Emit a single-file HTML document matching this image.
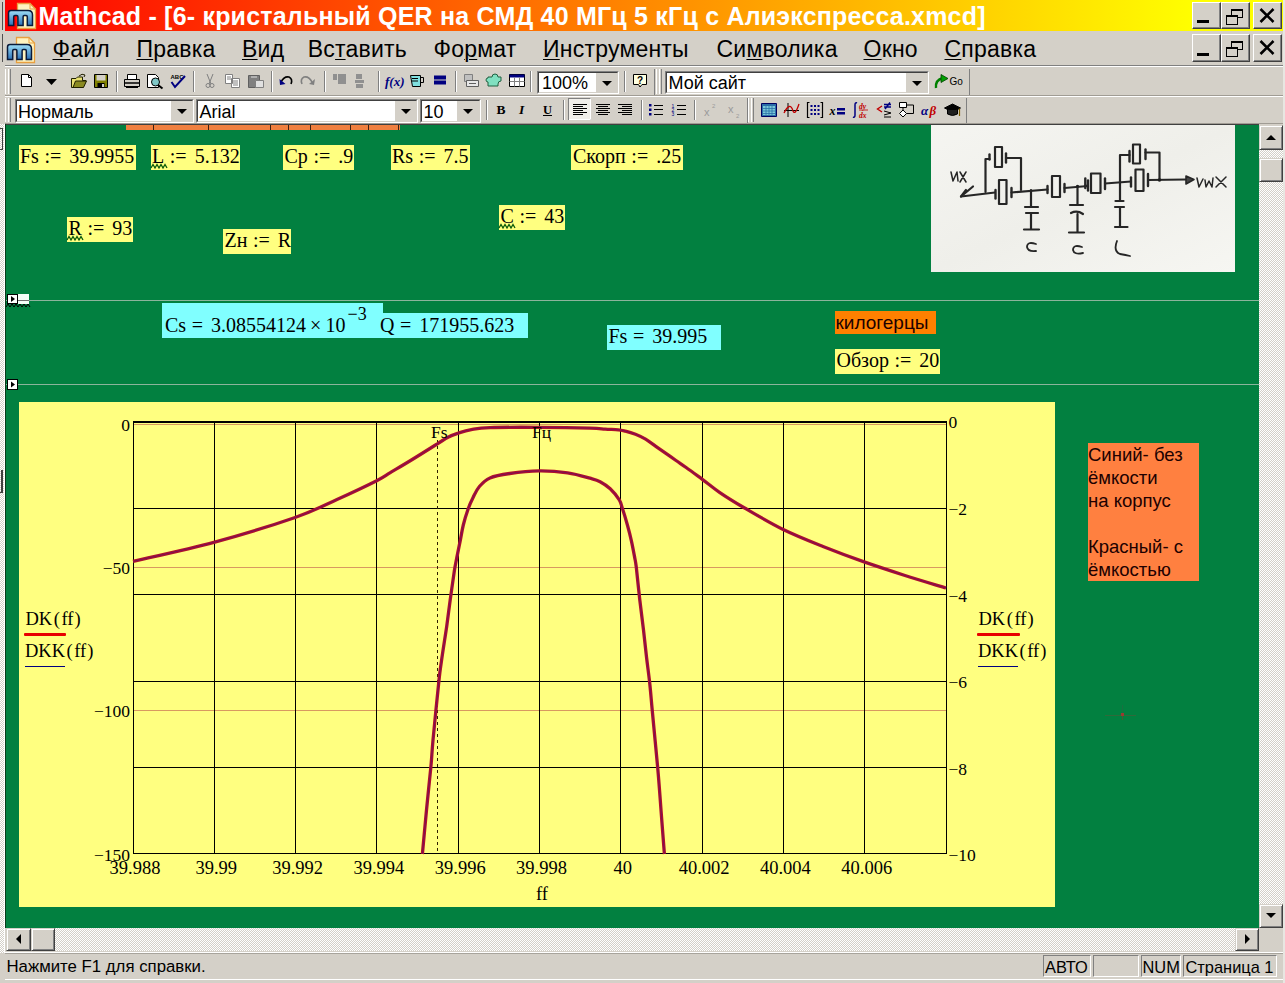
<!DOCTYPE html>
<html><head><meta charset="utf-8">
<style>
html,body{margin:0;padding:0;}
body{width:1285px;height:983px;overflow:hidden;position:relative;background:#d4d0c8;font-family:"Liberation Sans",sans-serif;}
.a{position:absolute;}
.t{position:absolute;white-space:pre;line-height:1;}
.s{font-family:"Liberation Sans",sans-serif;}
.m{font-family:"Liberation Serif",serif;}
.u{text-decoration:underline;text-decoration-thickness:1px;text-underline-offset:2px;}
.dith{background-color:#eeece6;background-image:repeating-conic-gradient(#d4d0c8 0 25%,#ffffff 0 50%);background-size:2px 2px;}
</style></head><body>
<div class="a" style="left:0px;top:0px;width:6px;height:983px;background:#d4d0c8;"></div>
<div class="a dith" style="left:0;top:124px;width:4px;height:829px;"></div>
<div class="a" style="left:4px;top:124px;width:1px;height:829px;background:#fff;"></div>
<div class="a" style="left:5px;top:124px;width:1px;height:804px;background:#0a3a1a;"></div>
<div class="a" style="left:2px;top:2px;width:1px;height:28px;background:#505050;"></div>
<div class="a" style="left:2px;top:34px;width:1px;height:28px;background:#505050;"></div>
<div class="a" style="left:-2px;top:128px;width:5px;height:22px;box-sizing:border-box;border:1px solid #404040;border-left:none;"></div>
<div class="a" style="left:-2px;top:470px;width:5px;height:23px;box-sizing:border-box;border-right:2px solid #404040;border-bottom:1px solid #404040;"></div>
<div class="a" style="left:5px;top:0px;width:1280px;height:31px;background:linear-gradient(to right,#ff0000 0px,#ffff00 1190px);"></div>
<div class="t s" style="left:38.5px;top:4.25px;font-size:25px;color:#fff;font-weight:bold;letter-spacing:0.2px;">Mathcad - [6- кристальный QER на СМД 40 МГц 5 кГц с Алиэкспресса.xmcd]</div>
<div class="a" style="left:5px;top:31px;width:1280px;height:35px;background:#d4d0c8;"></div>
<div class="a" style="left:5px;top:65px;width:1280px;height:1px;background:#808080;"></div>
<div class="a" style="left:5px;top:66px;width:1280px;height:1px;background:#fff;"></div>
<div class="t s" style="left:52.5px;top:38.05px;font-size:23px;color:#000;letter-spacing:0.22px;"><span class="u">Ф</span>айл</div>
<div class="t s" style="left:136.5px;top:38.05px;font-size:23px;color:#000;letter-spacing:0.22px;"><span class="u">П</span>равка</div>
<div class="t s" style="left:242px;top:38.05px;font-size:23px;color:#000;letter-spacing:0.22px;"><span class="u">В</span>ид</div>
<div class="t s" style="left:307.8px;top:38.05px;font-size:23px;color:#000;letter-spacing:0.22px;">Вс<span class="u">т</span>авить</div>
<div class="t s" style="left:433.5px;top:38.05px;font-size:23px;color:#000;letter-spacing:0.22px;">Фо<span class="u">р</span>мат</div>
<div class="t s" style="left:543px;top:38.05px;font-size:23px;color:#000;letter-spacing:0.22px;"><span class="u">И</span>нструменты</div>
<div class="t s" style="left:716.5px;top:38.05px;font-size:23px;color:#000;letter-spacing:0.22px;">Си<span class="u">м</span>волика</div>
<div class="t s" style="left:863.5px;top:38.05px;font-size:23px;color:#000;letter-spacing:0.22px;"><span class="u">О</span>кно</div>
<div class="t s" style="left:944.5px;top:38.05px;font-size:23px;color:#000;letter-spacing:0.22px;"><span class="u">С</span>правка</div>
<div class="a" style="left:1192px;top:2px;width:29px;height:27px;background:#d4d0c8;box-sizing:border-box;border-top:1px solid #fff;border-left:1px solid #fff;border-right:1px solid #404040;border-bottom:1px solid #404040;box-shadow:inset -1px -1px 0 #808080;"></div><svg class="a" style="left:1192px;top:2px" width="29" height="27" shape-rendering="crispEdges"><rect x="5" y="18" width="12" height="3" fill="#000"/></svg>
<div class="a" style="left:1221px;top:2px;width:29px;height:27px;background:#d4d0c8;box-sizing:border-box;border-top:1px solid #fff;border-left:1px solid #fff;border-right:1px solid #404040;border-bottom:1px solid #404040;box-shadow:inset -1px -1px 0 #808080;"></div><svg class="a" style="left:1221px;top:2px" width="29" height="27" shape-rendering="crispEdges"><rect x="10.5" y="7.5" width="11" height="8" fill="none" stroke="#000" stroke-width="1"/><rect x="10" y="7" width="12" height="2" fill="#000"/><rect x="5.5" y="13.5" width="11" height="9" fill="#d4d0c8" stroke="#000" stroke-width="1"/><rect x="5" y="13" width="12" height="2" fill="#000"/></svg>
<div class="a" style="left:1253px;top:2px;width:29px;height:27px;background:#d4d0c8;box-sizing:border-box;border-top:1px solid #fff;border-left:1px solid #fff;border-right:1px solid #404040;border-bottom:1px solid #404040;box-shadow:inset -1px -1px 0 #808080;"></div><svg class="a" style="left:1253px;top:2px" width="29" height="27" shape-rendering="crispEdges"><path d="M7.5,7 L20.5,20 M20.5,7 L7.5,20" stroke="#000" stroke-width="2.6" shape-rendering="geometricPrecision"/></svg>
<div class="a" style="left:1192px;top:34px;width:29px;height:28px;background:#d4d0c8;box-sizing:border-box;border-top:1px solid #fff;border-left:1px solid #fff;border-right:1px solid #404040;border-bottom:1px solid #404040;box-shadow:inset -1px -1px 0 #808080;"></div><svg class="a" style="left:1192px;top:34px" width="29" height="28" shape-rendering="crispEdges"><rect x="5" y="19" width="12" height="3" fill="#000"/></svg>
<div class="a" style="left:1221px;top:34px;width:29px;height:28px;background:#d4d0c8;box-sizing:border-box;border-top:1px solid #fff;border-left:1px solid #fff;border-right:1px solid #404040;border-bottom:1px solid #404040;box-shadow:inset -1px -1px 0 #808080;"></div><svg class="a" style="left:1221px;top:34px" width="29" height="28" shape-rendering="crispEdges"><rect x="10.5" y="7.5" width="11" height="8" fill="none" stroke="#000" stroke-width="1"/><rect x="10" y="7" width="12" height="2" fill="#000"/><rect x="5.5" y="13.5" width="11" height="9" fill="#d4d0c8" stroke="#000" stroke-width="1"/><rect x="5" y="13" width="12" height="2" fill="#000"/></svg>
<div class="a" style="left:1253px;top:34px;width:29px;height:28px;background:#d4d0c8;box-sizing:border-box;border-top:1px solid #fff;border-left:1px solid #fff;border-right:1px solid #404040;border-bottom:1px solid #404040;box-shadow:inset -1px -1px 0 #808080;"></div><svg class="a" style="left:1253px;top:34px" width="29" height="28" shape-rendering="crispEdges"><path d="M7.5,7 L20.5,20 M20.5,7 L7.5,20" stroke="#000" stroke-width="2.6" shape-rendering="geometricPrecision"/></svg>
<svg class="a" style="left:7px;top:2px" width="32" height="28"><defs><linearGradient id="mg2" x1="0" y1="0" x2="0" y2="1"><stop offset="0" stop-color="#9fe0f8"/><stop offset="1" stop-color="#2a70b8"/></linearGradient></defs><path d="M10.5,1.5 H23 L28.5,7 V26.5 H10.5 Z" fill="#fff4c0" stroke="#e8a040" stroke-width="1.3"/><path d="M23,1.5 V7 H28.5" fill="none" stroke="#e8a040" stroke-width="1"/><path transform="translate(1.5,8.5)" d="M0,15 V2.5 Q0,0 2.5,0 H19.5 Q24,0 24,4.5 V15 H18.8 V6.2 Q18.8,5 17.6,5 H15.6 Q14.6,5 14.6,6.2 V15 H9.4 V6.2 Q9.4,5 8.2,5 H6.4 Q5.2,5 5.2,6.2 V15 Z" fill="url(#mg2)" stroke="#0a1a3a" stroke-width="1.5"/></svg>
<svg class="a" style="left:6px;top:36px" width="32" height="28"><defs><linearGradient id="mg36" x1="0" y1="0" x2="0" y2="1"><stop offset="0" stop-color="#9fe0f8"/><stop offset="1" stop-color="#2a70b8"/></linearGradient></defs><path d="M10.5,1.5 H23 L28.5,7 V26.5 H10.5 Z" fill="#fff4c0" stroke="#e8a040" stroke-width="1.3"/><path d="M23,1.5 V7 H28.5" fill="none" stroke="#e8a040" stroke-width="1"/><path transform="translate(1.5,8.5)" d="M0,15 V2.5 Q0,0 2.5,0 H19.5 Q24,0 24,4.5 V15 H18.8 V6.2 Q18.8,5 17.6,5 H15.6 Q14.6,5 14.6,6.2 V15 H9.4 V6.2 Q9.4,5 8.2,5 H6.4 Q5.2,5 5.2,6.2 V15 Z" fill="url(#mg36)" stroke="#0a1a3a" stroke-width="1.5"/></svg>
<div class="a" style="left:5px;top:95px;width:1278px;height:1px;background:#a09c94;"></div>
<div class="a" style="left:5px;top:96px;width:1278px;height:1px;background:#fff;"></div>
<div class="a" style="left:5px;top:123px;width:1278px;height:1px;background:#a09c94;"></div>
<svg class="a" style="left:0;top:66px" width="1285" height="58" shape-rendering="crispEdges">
<rect x="5" y="3" width="1" height="25" fill="#fff"/>
<rect x="8" y="3" width="1" height="25" fill="#fff"/>
<rect x="10" y="3" width="1" height="25" fill="#808080"/>
<rect x="5" y="32" width="1" height="24" fill="#fff"/>
<rect x="8" y="32" width="1" height="24" fill="#fff"/>
<rect x="10" y="32" width="1" height="24" fill="#808080"/>
<rect x="656" y="3" width="1" height="25" fill="#fff"/>
<rect x="659" y="3" width="1" height="25" fill="#fff"/>
<rect x="661" y="3" width="1" height="25" fill="#808080"/>
<rect x="748" y="32" width="1" height="24" fill="#fff"/>
<rect x="751" y="32" width="1" height="24" fill="#fff"/>
<rect x="753" y="32" width="1" height="24" fill="#808080"/>
<rect x="116" y="5" width="1" height="21" fill="#808080"/>
<rect x="117" y="5" width="1" height="21" fill="#fff"/>
<rect x="193" y="5" width="1" height="21" fill="#808080"/>
<rect x="194" y="5" width="1" height="21" fill="#fff"/>
<rect x="271" y="5" width="1" height="21" fill="#808080"/>
<rect x="272" y="5" width="1" height="21" fill="#fff"/>
<rect x="324" y="5" width="1" height="21" fill="#808080"/>
<rect x="325" y="5" width="1" height="21" fill="#fff"/>
<rect x="378" y="5" width="1" height="21" fill="#808080"/>
<rect x="379" y="5" width="1" height="21" fill="#fff"/>
<rect x="455" y="5" width="1" height="21" fill="#808080"/>
<rect x="456" y="5" width="1" height="21" fill="#fff"/>
<rect x="530" y="5" width="1" height="21" fill="#808080"/>
<rect x="531" y="5" width="1" height="21" fill="#fff"/>
<rect x="624" y="5" width="1" height="21" fill="#808080"/>
<rect x="625" y="5" width="1" height="21" fill="#fff"/>
<rect x="486" y="34" width="1" height="20" fill="#808080"/>
<rect x="487" y="34" width="1" height="20" fill="#fff"/>
<rect x="563" y="34" width="1" height="20" fill="#808080"/>
<rect x="564" y="34" width="1" height="20" fill="#fff"/>
<rect x="641" y="34" width="1" height="20" fill="#808080"/>
<rect x="642" y="34" width="1" height="20" fill="#fff"/>
<rect x="694" y="34" width="1" height="20" fill="#808080"/>
<rect x="695" y="34" width="1" height="20" fill="#fff"/>
<rect x="654" y="3" width="1" height="26" fill="#808080"/>
<rect x="969" y="3" width="1" height="26" fill="#808080"/>
<rect x="747" y="32" width="1" height="25" fill="#808080"/>
<rect x="966" y="32" width="1" height="25" fill="#808080"/>
</svg>
<svg class="a" style="left:0;top:0" width="1285" height="124">
<path d="M21.5,74.5 H28.5 L31.5,77.5 V86.5 H21.5 Z" fill="#fff" stroke="#000" stroke-width="1" />
<path d="M28.5,74.5 V77.5 H31.5" fill="none" stroke="#000" stroke-width="1" />
<path d="M46,79 H57 L51.5,85 Z" fill="#000" stroke="none" stroke-width="1" />
<path d="M71.5,78.5 H76 L77.5,77 H82.5 V80.5 H86 L83,87.5 H71.5 Z" fill="#e8e070" stroke="#202000" stroke-width="1" />
<path d="M73,87.5 L75.5,81 H86.5 L83.5,87.5 Z" fill="#8a8a20" stroke="#202000" stroke-width="1" />
<path d="M79,76 Q82,73 85,75 L84,77" fill="none" stroke="#202000" stroke-width="1" />
<path d="M94.5,74.5 H107.5 V87.5 H94.5 Z" fill="#808000" stroke="#000" stroke-width="1" />
<path d="M96.5,75 H105.5 V80.5 H96.5 Z" fill="#d4d0c8" stroke="none" stroke-width="1" />
<path d="M97.5,83 H104.5 V87.5 H97.5 Z" fill="#000" stroke="none" stroke-width="1" />
<path d="M102,84 H104 V87 H102 Z" fill="#d4d0c8" stroke="none" stroke-width="1" />
<path d="M127.5,74.5 H136.5 V79.5 H127.5 Z" fill="#fff" stroke="#000" stroke-width="1" />
<path d="M124.5,79.5 H139.5 V86.5 H124.5 Z" fill="#d4d0c8" stroke="#000" stroke-width="1" />
<path d="M125,83 H139" fill="none" stroke="#000" stroke-width="1.5" />
<path d="M126,87.5 H138" fill="none" stroke="#000" stroke-width="1" />
<path d="M147.5,74.5 H155.5 L158.5,77.5 V87.5 H147.5 Z" fill="#fff" stroke="#000" stroke-width="1" />
<path d="M155.5,82 m-4,0 a4,4 0 1,0 8,0 a4,4 0 1,0 -8,0" fill="#80c8c8" stroke="#000" stroke-width="1" />
<path d="M158,85 L162.5,88.5" fill="none" stroke="#000" stroke-width="2" />
<text x="170.5" y="78.8" font-family="Liberation Sans" font-weight="bold" font-size="6" fill="#000">ABC</text>
<path d="M171.5,82 L175,87 L185,76" fill="none" stroke="#000080" stroke-width="2" />
<path d="M207,74 L211,84 M213,74 L209,84" fill="none" stroke="#808080" stroke-width="1" />
<path d="M208,85.5 m-2,0 a2,2 0 1,0 4,0 a2,2 0 1,0 -4,0 M212,85.5 m-2,0 a2,2 0 1,0 4,0 a2,2 0 1,0 -4,0" fill="none" stroke="#808080" stroke-width="1" />
<path d="M225.5,74.5 H232.5 V83.5 H225.5 Z M231.5,78.5 H239.5 V87.5 H231.5 Z" fill="#fff" stroke="#808080" stroke-width="1" />
<path d="M227,77 H231 M227,79 H231 M233,81 H238 M233,83 H238 M233,85 H238" fill="none" stroke="#808080" stroke-width="1" />
<path d="M248.5,75.5 H259.5 V87.5 H248.5 Z" fill="#808080" stroke="#606060" stroke-width="1" />
<path d="M255.5,80.5 H263.5 V87.5 H255.5 Z" fill="#e0e0e0" stroke="#808080" stroke-width="1" />
<path d="M251,77 H257" fill="none" stroke="#e0e0e0" stroke-width="1" />
<path d="M281,82 Q284,76 289,77 Q293,79 291,84" fill="none" stroke="#000" stroke-width="1.6" />
<path d="M279.5,79 L280,85 L285.5,84 Z" fill="#000080" stroke="none" stroke-width="1" />
<path d="M312,82 Q309,76 304,77 Q300,79 302,84" fill="none" stroke="#808080" stroke-width="1.6" />
<path d="M315,79 L314,85 L309,84 Z" fill="#808080" stroke="none" stroke-width="1" />
<path d="M333,74 H337 V80 H333 Z M338,74 H346 V84 H338 Z" fill="#909090" stroke="none" stroke-width="1" />
<path d="M356,74 H362 V79 H356 Z M355,80 H364 V83 H355 Z M356,84 H363 V88 H356 Z" fill="#909090" stroke="none" stroke-width="1" />
<text x="385" y="85.5" font-family="Liberation Serif" font-style="italic" font-weight="bold" font-size="13" fill="#000080">f(x)</text>
<path d="M410.5,75.5 H420.5 V86.5 H412.5 Z" fill="#80e0e0" stroke="#000" stroke-width="1" />
<path d="M420.5,77.5 H423.5 V82.5 H420.5" fill="none" stroke="#000" stroke-width="1" />
<path d="M412,78.5 H418 M412,81 H418" fill="none" stroke="#000" stroke-width="1" />
<path d="M434,75.5 H446 V79.5 H434 Z M434,80.5 H446 V84.5 H434 Z" fill="#000080" stroke="none" stroke-width="1" />
<path d="M464.5,74.5 H472.5 V81.5 H464.5 Z" fill="#c0c0c0" stroke="#808080" stroke-width="1" />
<path d="M466.5,80.5 H478.5 V86.5 H466.5 Z" fill="#e8e8e8" stroke="#606060" stroke-width="1" />
<path d="M469,83.5 H476" fill="none" stroke="#606060" stroke-width="1" />
<path d="M488,77 H492 Q492,74 495,74 Q498,74 498,77 H501 V81 Q498,81 498,84 V86 H488 V82 Q486,82 486,80 Q486,78 488,78 Z" fill="#80e0c0" stroke="#206040" stroke-width="1" />
<path d="M509.5,74.5 H524.5 V86.5 H509.5 Z" fill="#fff" stroke="#000" stroke-width="1" />
<path d="M509.5,74.5 H524.5 V77.5 H509.5 Z" fill="#000080" stroke="none" stroke-width="1" />
<path d="M509.5,81.5 H524.5 M514.5,77.5 V86.5 M519.5,77.5 V86.5" fill="none" stroke="#808080" stroke-width="1" />
<path d="M633.5,74.5 H646.5 V84.5 H642 L640,87 L638.5,84.5 H633.5 Z" fill="#ffffe0" stroke="#000" stroke-width="1" />
<text x="637" y="83.5" font-family="Liberation Sans" font-weight="bold" font-size="10" fill="#000">?</text>
<path d="M936,88 Q935,80 943,78" fill="none" stroke="#008000" stroke-width="2.4" />
<path d="M941,74.5 L948,78.5 L941,82.5 Z" fill="#00a000" stroke="#004000" stroke-width="0.8" />
<text x="496.5" y="114" font-family="Liberation Serif" font-weight="bold" font-size="13.5" fill="#000">B</text>
<text x="519" y="114" font-family="Liberation Serif" font-style="italic" font-weight="bold" font-size="13.5" fill="#000">I</text>
<text x="543" y="113.5" font-family="Liberation Serif" font-weight="bold" font-size="12.5" fill="#000">U</text>
<path d="M543,115.5 H552" fill="none" stroke="#000" stroke-width="1" />
<rect x="568.5" y="98.5" width="22" height="21" fill="#f0eee9" stroke="#808080" stroke-width="1"/>
<path d="M569,119.5 H590.5 V98.5" fill="none" stroke="#fff"/>
<path d="M573,104.5 H587 M573,106.5 H583 M573,108.5 H587 M573,110.5 H583 M573,112.5 H587 M573,114.5 H583" fill="none" stroke="#000" stroke-width="1" />
<path d="M596,104.5 H610 M598,106.5 H608 M596,108.5 H610 M598,110.5 H608 M596,112.5 H610 M598,114.5 H608" fill="none" stroke="#000" stroke-width="1" />
<path d="M618,104.5 H632 M622,106.5 H632 M618,108.5 H632 M622,110.5 H632 M618,112.5 H632 M622,114.5 H632" fill="none" stroke="#000" stroke-width="1" />
<path d="M649,104 H651.5 V106.5 H649 Z M649,108.5 H651.5 V111 H649 Z M649,113 H651.5 V115.5 H649 Z" fill="#000080" stroke="none" stroke-width="1" />
<path d="M654,105.5 H663 M654,109.5 H663 M654,114.5 H663" fill="none" stroke="#000" stroke-width="1" />
<text x="671.5" y="108" font-family="Liberation Sans" font-size="5" fill="#000080">1</text>
<text x="671.5" y="112" font-family="Liberation Sans" font-size="5" fill="#000080">2</text>
<text x="671.5" y="116" font-family="Liberation Sans" font-size="5" fill="#000080">3</text>
<path d="M677,105.5 H686 M677,109.5 H686 M677,114.5 H686" fill="none" stroke="#000" stroke-width="1" />
<text x="704" y="116" font-family="Liberation Sans" font-size="11" fill="#9a9a9a">x</text><text x="712" y="108" font-family="Liberation Sans" font-size="6" fill="#9a9a9a">2</text>
<text x="728" y="113" font-family="Liberation Sans" font-size="11" fill="#9a9a9a">x</text><text x="736" y="118" font-family="Liberation Sans" font-size="6" fill="#9a9a9a">2</text>
<path d="M761.5,103.5 H776.5 V116.5 H761.5 Z" fill="#2a6ea8" stroke="#000060" stroke-width="1" />
<path d="M763,106 H775 V115 H763 Z" fill="#7ac8d8" stroke="none" stroke-width="1" />
<path d="M763,108.5 H775 M763,111 H775 M763,113.5 H775 M766,106 V115 M769,106 V115 M772,106 V115" fill="none" stroke="#2a6ea8" stroke-width="0.8" />
<path d="M788,103 V117 M784,110.5 H799" fill="none" stroke="#000" stroke-width="1" />
<path d="M784,113 Q790,101 793,111 Q795,116 799,104" fill="none" stroke="#c00000" stroke-width="1.3" />
<path d="M809.5,102.5 H807.5 V117.5 H809.5 M820.5,102.5 H822.5 V117.5 H820.5" fill="none" stroke="#000" stroke-width="1.2" />
<path d="M810.5,105 h2v2h-2z M814,105 h2v2h-2z M817.5,105 h2v2h-2z M810.5,109 h2v2h-2z M814,109 h2v2h-2z M817.5,109 h2v2h-2z M810.5,113 h2v2h-2z M814,113 h2v2h-2z M817.5,113 h2v2h-2z" fill="#000080" stroke="none" stroke-width="1" />
<text x="829.5" y="114.5" font-family="Liberation Serif" font-style="italic" font-weight="bold" font-size="12" fill="#000">x</text>
<path d="M837,108 H845 V110.5 H837 Z M837,112 H845 V114.5 H837 Z" fill="#000080" stroke="none" stroke-width="1" />
<path d="M857,103 Q855,102 855,105 V115 Q855,118 853,117" fill="none" stroke="#000080" stroke-width="1.5" />
<text x="859" y="109" font-family="Liberation Serif" font-style="italic" font-weight="bold" font-size="7.5" fill="#c00000">dy</text>
<text x="859" y="117.5" font-family="Liberation Serif" font-style="italic" font-weight="bold" font-size="7.5" fill="#c00000">dx</text>
<path d="M859,110 H868" fill="none" stroke="#c00000" stroke-width="0.8" />
<path d="M882,106 L877.5,109 L882,112" fill="none" stroke="#c00000" stroke-width="1.4" />
<path d="M884,104.5 H891 M884,107 H891 M890,102.5 L885,109" fill="none" stroke="#000080" stroke-width="1.5" />
<path d="M884,111 L891,113 L884,115 M884,117 H891" fill="none" stroke="#000" stroke-width="1" />
<path d="M899.5,102.5 H906.5 V107.5 H899.5 Z" fill="#fff" stroke="#000" stroke-width="1" />
<path d="M903,107.5 V110 L899.5,113.5 L903,117 L906.5,113.5 L903,110" fill="#fff" stroke="#000" stroke-width="1" />
<path d="M906.5,105 H913.5 V113.5 H906.5" fill="none" stroke="#000" stroke-width="1" />
<text x="921" y="115" font-family="Liberation Serif" font-style="italic" font-weight="bold" font-size="13" fill="#000080">α</text>
<text x="929.5" y="115" font-family="Liberation Serif" font-style="italic" font-weight="bold" font-size="13" fill="#c00000">β</text>
<path d="M944.5,108 L952.5,104 L960.5,108 L952.5,112 Z" fill="#000" stroke="#000" stroke-width="1" />
<path d="M947.5,110 V114 Q952.5,117 957.5,114 V110" fill="#202020" stroke="#000" stroke-width="1" />
<path d="M959.5,108.5 V116" fill="none" stroke="#806000" stroke-width="1.2" />
</svg>
<div class="a" style="left:537px;top:71px;width:82px;height:23px;background:#fff;box-sizing:border-box;border-top:1px solid #808080;border-left:1px solid #808080;border-bottom:1px solid #fff;border-right:1px solid #fff;"></div><div class="a" style="left:538px;top:72px;width:80px;height:21px;box-sizing:border-box;border-top:1px solid #404040;border-left:1px solid #404040;border-bottom:1px solid #d4d0c8;border-right:1px solid #d4d0c8;"></div><div class="a" style="left:596px;top:73px;width:21px;height:19px;background:#d4d0c8;box-sizing:border-box;"></div><svg class="a" style="left:600.5px;top:79.5px" width="12" height="7"><path d="M1,1 H11 L6,6 Z" fill="#000"/></svg><div class="t s" style="left:542px;top:74.00px;font-size:18px;">100%</div>
<div class="a" style="left:665px;top:71px;width:264px;height:23px;background:#fff;box-sizing:border-box;border-top:1px solid #808080;border-left:1px solid #808080;border-bottom:1px solid #fff;border-right:1px solid #fff;"></div><div class="a" style="left:666px;top:72px;width:262px;height:21px;box-sizing:border-box;border-top:1px solid #404040;border-left:1px solid #404040;border-bottom:1px solid #d4d0c8;border-right:1px solid #d4d0c8;"></div><div class="a" style="left:906px;top:73px;width:21px;height:19px;background:#d4d0c8;box-sizing:border-box;"></div><svg class="a" style="left:910.5px;top:79.5px" width="12" height="7"><path d="M1,1 H11 L6,6 Z" fill="#000"/></svg><div class="t s" style="left:668.5px;top:74.00px;font-size:18px;">Мой сайт</div>
<div class="a" style="left:15px;top:99px;width:179px;height:24px;background:#fff;box-sizing:border-box;border-top:1px solid #808080;border-left:1px solid #808080;border-bottom:1px solid #fff;border-right:1px solid #fff;"></div><div class="a" style="left:16px;top:100px;width:177px;height:22px;box-sizing:border-box;border-top:1px solid #404040;border-left:1px solid #404040;border-bottom:1px solid #d4d0c8;border-right:1px solid #d4d0c8;"></div><div class="a" style="left:171px;top:101px;width:21px;height:20px;background:#d4d0c8;box-sizing:border-box;"></div><svg class="a" style="left:175.5px;top:108.0px" width="12" height="7"><path d="M1,1 H11 L6,6 Z" fill="#000"/></svg><div class="t s" style="left:18px;top:103.30px;font-size:18px;">Нормаль</div>
<div class="a" style="left:196px;top:99px;width:222px;height:24px;background:#fff;box-sizing:border-box;border-top:1px solid #808080;border-left:1px solid #808080;border-bottom:1px solid #fff;border-right:1px solid #fff;"></div><div class="a" style="left:197px;top:100px;width:220px;height:22px;box-sizing:border-box;border-top:1px solid #404040;border-left:1px solid #404040;border-bottom:1px solid #d4d0c8;border-right:1px solid #d4d0c8;"></div><div class="a" style="left:395px;top:101px;width:21px;height:20px;background:#d4d0c8;box-sizing:border-box;"></div><svg class="a" style="left:399.5px;top:108.0px" width="12" height="7"><path d="M1,1 H11 L6,6 Z" fill="#000"/></svg><div class="t s" style="left:199.5px;top:103.30px;font-size:18px;">Arial</div>
<div class="a" style="left:420px;top:99px;width:61px;height:24px;background:#fff;box-sizing:border-box;border-top:1px solid #808080;border-left:1px solid #808080;border-bottom:1px solid #fff;border-right:1px solid #fff;"></div><div class="a" style="left:421px;top:100px;width:59px;height:22px;box-sizing:border-box;border-top:1px solid #404040;border-left:1px solid #404040;border-bottom:1px solid #d4d0c8;border-right:1px solid #d4d0c8;"></div><div class="a" style="left:457px;top:101px;width:22px;height:20px;background:#d4d0c8;box-sizing:border-box;"></div><svg class="a" style="left:462.0px;top:108.0px" width="12" height="7"><path d="M1,1 H11 L6,6 Z" fill="#000"/></svg><div class="t s" style="left:423.5px;top:103.30px;font-size:18px;">10</div>
<div class="t s" style="left:949.5px;top:76.9px;font-size:10px;">Go</div>
<div class="a" style="left:6px;top:124px;width:1253px;height:1px;background:#404040;"></div>
<div class="a" style="left:6px;top:125px;width:1253px;height:803px;background:#028040;"></div>
<div class="a" style="left:126px;top:125px;width:274px;height:5px;background:#f08040;"></div>
<div class="a" style="left:6px;top:300px;width:1253px;height:1px;background:#8cb49c;"></div>
<div class="a" style="left:6px;top:384px;width:1253px;height:1px;background:#8cb49c;"></div>
<div class="a" style="left:7px;top:294px;width:11px;height:10px;background:#fff;box-sizing:border-box;border:1px solid #000;"></div>
<svg class="a" style="left:7px;top:294px" width="11" height="10"><path d="M4 2 L8 5 L4 8Z" fill="#000"/></svg>
<div class="a" style="left:18px;top:294px;width:11px;height:10px;background:#f4fff8;"></div>
<div class="a" style="left:18px;top:300px;width:11px;height:1px;background:#707070;"></div>
<div class="a" style="left:7px;top:379px;width:11px;height:11px;background:#fff;box-sizing:border-box;border:1px solid #000;"></div>
<svg class="a" style="left:7px;top:379px" width="11" height="11"><path d="M4 2.5 L8 5.5 L4 8.5Z" fill="#000"/></svg>
<div class="a" style="left:19px;top:145px;width:117px;height:25px;background:#ffff80;"></div>
<div class="t m" style="left:20px;top:146.20px;font-size:20px;"><span>Fs</span><span style="margin:0 8px 0 5.6px">:=</span><span>39.9955</span></div>
<div class="a" style="left:151px;top:145px;width:89px;height:25px;background:#ffff80;"></div>
<div class="t m" style="left:152px;top:146.20px;font-size:20px;"><span>L</span><span style="margin:0 8px 0 5.6px">:=</span><span>5.132</span></div>
<div class="a" style="left:283px;top:145px;width:71px;height:25px;background:#ffff80;"></div>
<div class="t m" style="left:284.5px;top:146.20px;font-size:20px;"><span>Cp</span><span style="margin:0 8px 0 5.6px">:=</span><span>.9</span></div>
<div class="a" style="left:391px;top:145px;width:79px;height:25px;background:#ffff80;"></div>
<div class="t m" style="left:392px;top:146.20px;font-size:20px;"><span>Rs</span><span style="margin:0 8px 0 5.6px">:=</span><span>7.5</span></div>
<div class="a" style="left:571px;top:145px;width:112px;height:25px;background:#ffff80;"></div>
<div class="t m" style="left:573px;top:146.20px;font-size:20px;"><span>Скорп</span><span style="margin:0 8px 0 5.6px">:=</span><span>.25</span></div>
<div class="a" style="left:67px;top:217px;width:66px;height:25px;background:#ffff80;"></div>
<div class="t m" style="left:68.5px;top:218.20px;font-size:20px;"><span>R</span><span style="margin:0 8px 0 5.6px">:=</span><span>93</span></div>
<div class="a" style="left:499px;top:205px;width:66px;height:25px;background:#ffff80;"></div>
<div class="t m" style="left:500.5px;top:206.20px;font-size:20px;"><span>C</span><span style="margin:0 8px 0 5.6px">:=</span><span>43</span></div>
<div class="a" style="left:223px;top:229px;width:68px;height:25px;background:#ffff80;"></div>
<div class="t m" style="left:224.5px;top:230.20px;font-size:20px;"><span>Zн</span><span style="margin:0 8px 0 5.6px">:=</span><span>R</span></div>
<div class="a" style="left:835px;top:349px;width:105px;height:25px;background:#ffff80;"></div>
<div class="t m" style="left:836.5px;top:350.20px;font-size:20px;"><span>Обзор</span><span style="margin:0 8px 0 5.6px">:=</span><span>20</span></div>
<svg class="a" style="left:0;top:0" width="1285" height="983"><polyline points="151.0,168.0 153.0,164.5 155.0,168.0 157.0,164.5 159.0,168.0 161.0,164.5 163.0,168.0 165.0,164.5 167.0,168.0" fill="none" stroke="#0a5a0a" stroke-width="1.3"/></svg>
<svg class="a" style="left:0;top:0" width="1285" height="983"><polyline points="67.0,240.0 69.0,236.5 71.0,240.0 73.0,236.5 75.0,240.0 77.0,236.5 79.0,240.0 81.0,236.5 83.0,240.0" fill="none" stroke="#0a5a0a" stroke-width="1.3"/></svg>
<svg class="a" style="left:0;top:0" width="1285" height="983"><polyline points="499.0,228.0 501.0,224.5 503.0,228.0 505.0,224.5 507.0,228.0 509.0,224.5 511.0,228.0 513.0,224.5 515.0,228.0" fill="none" stroke="#0a5a0a" stroke-width="1.3"/></svg>
<svg class="a" style="left:0;top:0" width="1285" height="983"><polyline points="6.0,307.0 8.0,304.0 10.0,307.0 12.0,304.0 14.0,307.0 16.0,304.0 18.0,307.0 20.0,304.0 22.0,307.0 24.0,304.0 26.0,307.0 28.0,304.0 30.0,307.0" fill="none" stroke="#000" stroke-width="1"/></svg>
<div class="a" style="left:153px;top:125px;width:1px;height:5px;background:#402010;"></div>
<div class="a" style="left:208px;top:125px;width:1px;height:5px;background:#402010;"></div>
<div class="a" style="left:270px;top:125px;width:1px;height:5px;background:#402010;"></div>
<div class="a" style="left:288px;top:125px;width:1px;height:5px;background:#402010;"></div>
<div class="a" style="left:310px;top:125px;width:1px;height:5px;background:#402010;"></div>
<div class="a" style="left:350px;top:125px;width:1px;height:5px;background:#402010;"></div>
<div class="a" style="left:368px;top:125px;width:1px;height:5px;background:#402010;"></div>
<div class="a" style="left:398px;top:125px;width:1px;height:5px;background:#402010;"></div>
<div class="a" style="left:835px;top:311px;width:101px;height:23px;background:#ff8000;"></div>
<div class="t s" style="left:835.5px;top:313.25px;font-size:19px;color:#200000;">килогерцы</div>
<div class="a" style="left:162px;top:303px;width:221px;height:35px;background:#80ffff;"></div>
<div class="a" style="left:383px;top:313px;width:145px;height:25px;background:#80ffff;"></div>
<div class="t m" style="left:165px;top:314.60px;font-size:20px;color:#000;"><span>Cs</span><span style="margin:0 8px 0 5.6px">=</span><span>3.08554124</span></div>
<div class="t m" style="left:310px;top:314.60px;font-size:20px;color:#000;">×</div>
<div class="t m" style="left:325.5px;top:314.60px;font-size:20px;color:#000;">10</div>
<div class="t m" style="left:347.5px;top:305.46px;font-size:18px;color:#000;">−3</div>
<div class="t m" style="left:380px;top:314.60px;font-size:20px;color:#000;"><span>Q</span><span style="margin:0 8px 0 5.6px">=</span><span>171955.623</span></div>
<div class="a" style="left:607px;top:325px;width:114px;height:25px;background:#80ffff;"></div>
<div class="t m" style="left:608.5px;top:326.20px;font-size:20px;color:#000;"><span>Fs</span><span style="margin:0 8px 0 5.6px">=</span><span>39.995</span></div>
<svg class="a" style="left:0;top:0" width="1285" height="983">
<defs><linearGradient id="pg" x1="0" y1="0" x2="1" y2="1"><stop offset="0" stop-color="#f5f5f1"/><stop offset="0.5" stop-color="#efefea"/><stop offset="1" stop-color="#f6f6f2"/></linearGradient></defs>
<rect x="931" y="125" width="304" height="147" fill="url(#pg)"/>
<path d="M961,196.5 L995,192.5" fill="none" stroke="#262626" stroke-width="2.2" stroke-linecap="round" stroke-linejoin="round"/>
<path d="M961,196.5 L973,186.5 M961,196.5 L966,190" fill="none" stroke="#262626" stroke-width="2.2" stroke-linecap="round" stroke-linejoin="round"/>
<path d="M951,172 L953,181 L957,172 L958,181 M960,172 L966,182 M966,172 L960,182" fill="none" stroke="#262626" stroke-width="1.5" stroke-linecap="round" stroke-linejoin="round"/>
<path d="M995.5,190 V198.5" fill="none" stroke="#262626" stroke-width="2.4" stroke-linecap="round" stroke-linejoin="round"/>
<path d="M999,180 H1006.5 V204 H999 Z" fill="none" stroke="#262626" stroke-width="2.2" stroke-linecap="round" stroke-linejoin="round"/>
<path d="M1011.5,188 V197" fill="none" stroke="#262626" stroke-width="2.4" stroke-linecap="round" stroke-linejoin="round"/>
<path d="M1011.5,192.5 L1047.5,189.5" fill="none" stroke="#262626" stroke-width="2.2" stroke-linecap="round" stroke-linejoin="round"/>
<path d="M1047.5,186 V193" fill="none" stroke="#262626" stroke-width="2.4" stroke-linecap="round" stroke-linejoin="round"/>
<path d="M985.5,192 V159 H989.5" fill="none" stroke="#262626" stroke-width="2.2" stroke-linecap="round" stroke-linejoin="round"/>
<path d="M989.5,154.5 V159.5" fill="none" stroke="#262626" stroke-width="2.4" stroke-linecap="round" stroke-linejoin="round"/>
<path d="M995,147 H1002 V167 H995 Z" fill="none" stroke="#262626" stroke-width="2.2" stroke-linecap="round" stroke-linejoin="round"/>
<path d="M1006,153.5 V162.5" fill="none" stroke="#262626" stroke-width="2.4" stroke-linecap="round" stroke-linejoin="round"/>
<path d="M1006,158 H1021 V190" fill="none" stroke="#262626" stroke-width="2.2" stroke-linecap="round" stroke-linejoin="round"/>
<path d="M1031,190 V207" fill="none" stroke="#262626" stroke-width="2.2" stroke-linecap="round" stroke-linejoin="round"/>
<path d="M1025,207 H1038 M1026,213 H1038 M1031,213 V229.5 M1024,229.5 H1039" fill="none" stroke="#262626" stroke-width="2.2" stroke-linecap="round" stroke-linejoin="round"/>
<path d="M1036,244 Q1027,241 1027,247 Q1028,252 1036,251" fill="none" stroke="#262626" stroke-width="1.8" stroke-linecap="round" stroke-linejoin="round"/>
<path d="M1052,176 H1060 V197 H1052 Z" fill="none" stroke="#262626" stroke-width="2.2" stroke-linecap="round" stroke-linejoin="round"/>
<path d="M1064.5,184 V192" fill="none" stroke="#262626" stroke-width="2.4" stroke-linecap="round" stroke-linejoin="round"/>
<path d="M1064.5,188 L1088,186" fill="none" stroke="#262626" stroke-width="2.2" stroke-linecap="round" stroke-linejoin="round"/>
<path d="M1088,180.5 V190.5" fill="none" stroke="#262626" stroke-width="2.4" stroke-linecap="round" stroke-linejoin="round"/>
<path d="M1077.5,186 V205 M1070,205 H1083 M1071,213 Q1077,210 1083,214 M1077.5,214 V232 M1069,232.5 H1084" fill="none" stroke="#262626" stroke-width="2.2" stroke-linecap="round" stroke-linejoin="round"/>
<path d="M1082,247 Q1073,244 1073,250 Q1074,255 1083,253" fill="none" stroke="#262626" stroke-width="1.8" stroke-linecap="round" stroke-linejoin="round"/>
<path d="M1088,186 L1085.3,185.5" fill="none" stroke="#262626" stroke-width="2.2" stroke-linecap="round" stroke-linejoin="round"/>
<path d="M1085.3,178.5 V188" fill="none" stroke="#262626" stroke-width="2.4" stroke-linecap="round" stroke-linejoin="round"/>
<path d="M1091,173.5 H1100.5 V193 H1091 Z" fill="none" stroke="#262626" stroke-width="2.2" stroke-linecap="round" stroke-linejoin="round"/>
<path d="M1105,178.5 V189" fill="none" stroke="#262626" stroke-width="2.4" stroke-linecap="round" stroke-linejoin="round"/>
<path d="M1105,183.5 L1131,181.5" fill="none" stroke="#262626" stroke-width="2.2" stroke-linecap="round" stroke-linejoin="round"/>
<path d="M1120,181.5 V155 H1129.5" fill="none" stroke="#262626" stroke-width="2.2" stroke-linecap="round" stroke-linejoin="round"/>
<path d="M1129.5,151 V161.5" fill="none" stroke="#262626" stroke-width="2.4" stroke-linecap="round" stroke-linejoin="round"/>
<path d="M1133,144.5 H1140 V163.5 H1133 Z" fill="none" stroke="#262626" stroke-width="2.2" stroke-linecap="round" stroke-linejoin="round"/>
<path d="M1145.5,149.5 V159" fill="none" stroke="#262626" stroke-width="2.4" stroke-linecap="round" stroke-linejoin="round"/>
<path d="M1145.5,152.5 H1159.5 V180" fill="none" stroke="#262626" stroke-width="2.2" stroke-linecap="round" stroke-linejoin="round"/>
<path d="M1131,177.5 V186.5" fill="none" stroke="#262626" stroke-width="2.4" stroke-linecap="round" stroke-linejoin="round"/>
<path d="M1135.5,169.5 H1143.5 V191 H1135.5 Z" fill="none" stroke="#262626" stroke-width="2.2" stroke-linecap="round" stroke-linejoin="round"/>
<path d="M1148,174 V186" fill="none" stroke="#262626" stroke-width="2.4" stroke-linecap="round" stroke-linejoin="round"/>
<path d="M1148,180 L1186,179.5" fill="none" stroke="#262626" stroke-width="2.2" stroke-linecap="round" stroke-linejoin="round"/>
<circle cx="1159.5" cy="180" r="1.8" fill="#1e1e1e"/><circle cx="1077.5" cy="186.3" r="1.5" fill="#1e1e1e"/>
<path d="M1186,176 L1194,179.5 L1186,184 Z" fill="#444" stroke="#262626" stroke-width="1.6" stroke-linecap="round" stroke-linejoin="round"/>
<path d="M1197,178 L1199,187 L1203,179 M1205,180 L1206,187 L1209,181 L1212,187 M1213,178 L1212,187 M1216,177 L1226,187 M1226,177 L1216,187" fill="none" stroke="#262626" stroke-width="1.5" stroke-linecap="round" stroke-linejoin="round"/>
<path d="M1120,181.5 V201 M1115.5,201 H1123.5 M1115,207 H1124 M1120,207 V227 M1115,227 H1127.5" fill="none" stroke="#262626" stroke-width="2.2" stroke-linecap="round" stroke-linejoin="round"/>
<path d="M1117,241 Q1113,251 1120,254 Q1126,255 1130,256" fill="none" stroke="#262626" stroke-width="1.8" stroke-linecap="round" stroke-linejoin="round"/>
</svg>
<div class="a" style="left:19px;top:402px;width:1036px;height:505px;background:#ffff80;"></div>
<svg class="a" style="left:0;top:0" width="1285" height="983" shape-rendering="crispEdges">
<rect x="134" y="424" width="812" height="1" fill="#d89a60"/>
<rect x="134" y="567" width="812" height="1" fill="#d89a60"/>
<rect x="134" y="710" width="812" height="1" fill="#d89a60"/>
<rect x="214" y="421" width="1" height="433" fill="#000"/>
<rect x="295" y="421" width="1" height="433" fill="#000"/>
<rect x="376" y="421" width="1" height="433" fill="#000"/>
<rect x="458" y="421" width="1" height="433" fill="#000"/>
<rect x="539" y="421" width="1" height="433" fill="#000"/>
<rect x="620" y="421" width="1" height="433" fill="#000"/>
<rect x="702" y="421" width="1" height="433" fill="#000"/>
<rect x="783" y="421" width="1" height="433" fill="#000"/>
<rect x="864" y="421" width="1" height="433" fill="#000"/>
<rect x="133" y="508" width="814" height="1" fill="#000"/>
<rect x="133" y="594" width="814" height="1" fill="#000"/>
<rect x="133" y="681" width="814" height="1" fill="#000"/>
<rect x="133" y="767" width="814" height="1" fill="#000"/>
<rect x="133" y="421" width="814" height="2" fill="#000"/>
<rect x="133" y="421" width="1" height="433" fill="#000"/>
<rect x="946" y="421" width="1" height="433" fill="#000"/>
<rect x="133" y="853" width="814" height="1" fill="#000"/>
</svg>
<svg class="a" style="left:0;top:0" width="1285" height="983">
<line x1="437.5" y1="440" x2="437.5" y2="853" stroke="#302000" stroke-width="1" stroke-dasharray="3,3"/>
<path d="M133.0,561.4 C146.6,558.2 187.8,549.4 214.7,542.1 C241.6,534.8 274.0,524.8 294.4,517.7 C314.8,510.6 323.3,505.7 337.0,499.5 C350.7,493.3 367.8,485.2 376.7,480.7 C385.6,476.2 384.6,476.0 390.3,472.6 C396.0,469.2 402.8,465.3 410.6,460.5 C418.5,455.7 431.2,447.7 437.4,443.8 C443.6,439.9 444.6,439.0 448.0,437.2 C451.4,435.4 454.2,434.5 458.1,433.2 C462.0,431.9 466.0,430.5 471.3,429.6 C476.6,428.7 478.6,428.0 490.0,427.6 C501.4,427.2 523.3,427.2 540.0,427.3 C556.7,427.4 579.1,427.8 590.0,428.1 C600.9,428.4 600.5,428.8 605.2,429.1 C609.9,429.4 614.9,429.5 618.3,429.8 C621.7,430.1 622.5,430.4 625.4,431.1 C628.3,431.8 632.1,432.9 635.5,434.2 C638.9,435.5 642.2,437.2 645.6,439.2 C649.0,441.2 652.4,443.9 655.8,446.3 C659.2,448.7 662.5,451.0 665.9,453.4 C669.3,455.8 672.6,458.1 676.0,460.5 C679.4,462.9 681.7,464.4 686.1,467.5 C690.5,470.6 696.7,475.2 702.3,479.3 C707.9,483.4 712.5,487.5 719.5,492.3 C726.5,497.1 734.0,501.8 744.6,508.0 C755.2,514.2 770.1,523.1 783.2,529.5 C796.3,535.9 809.5,541.1 823.0,546.5 C836.5,551.9 850.4,557.1 864.1,561.9 C877.8,566.7 891.4,571.1 905.0,575.5 C918.6,579.9 939.2,585.9 946.0,588.0" fill="none" stroke="#b0102c" stroke-width="3.3" stroke-linejoin="round"/>
<path d="M133.0,561.4 C146.6,558.2 187.8,549.4 214.7,542.1 C241.6,534.8 274.0,524.8 294.4,517.7 C314.8,510.6 323.3,505.7 337.0,499.5 C350.7,493.3 367.8,485.2 376.7,480.7 C385.6,476.2 384.6,476.0 390.3,472.6 C396.0,469.2 402.8,465.3 410.6,460.5 C418.5,455.7 431.2,447.7 437.4,443.8 C443.6,439.9 444.6,439.0 448.0,437.2 C451.4,435.4 454.2,434.5 458.1,433.2 C462.0,431.9 466.0,430.5 471.3,429.6 C476.6,428.7 478.6,428.0 490.0,427.6 C501.4,427.2 523.3,427.2 540.0,427.3 C556.7,427.4 579.1,427.8 590.0,428.1 C600.9,428.4 600.5,428.8 605.2,429.1 C609.9,429.4 614.9,429.5 618.3,429.8 C621.7,430.1 622.5,430.4 625.4,431.1 C628.3,431.8 632.1,432.9 635.5,434.2 C638.9,435.5 642.2,437.2 645.6,439.2 C649.0,441.2 652.4,443.9 655.8,446.3 C659.2,448.7 662.5,451.0 665.9,453.4 C669.3,455.8 672.6,458.1 676.0,460.5 C679.4,462.9 681.7,464.4 686.1,467.5 C690.5,470.6 696.7,475.2 702.3,479.3 C707.9,483.4 712.5,487.5 719.5,492.3 C726.5,497.1 734.0,501.8 744.6,508.0 C755.2,514.2 770.1,523.1 783.2,529.5 C796.3,535.9 809.5,541.1 823.0,546.5 C836.5,551.9 850.4,557.1 864.1,561.9 C877.8,566.7 891.4,571.1 905.0,575.5 C918.6,579.9 939.2,585.9 946.0,588.0" fill="none" stroke="#481078" stroke-opacity="0.55" stroke-width="1" stroke-linejoin="round"/>
<path d="M422.4,854.0 C423.1,846.7 425.1,824.5 426.5,810.0 C427.9,795.5 429.8,778.3 430.9,766.7 C432.0,755.1 431.7,754.3 433.0,740.2 C434.3,726.1 437.4,695.2 438.8,682.0 C440.2,668.8 440.2,670.0 441.5,660.8 C442.8,651.5 445.2,636.6 446.7,626.5 C448.1,616.4 448.9,609.3 450.2,600.0 C451.5,590.7 453.3,577.7 454.4,570.6 C455.5,563.5 455.9,562.5 456.8,557.6 C457.8,552.7 459.0,546.7 460.1,541.3 C461.2,535.9 462.0,530.4 463.3,525.0 C464.6,519.6 466.6,513.4 468.2,508.8 C469.8,504.2 471.2,501.1 473.1,497.4 C475.0,493.7 476.6,489.8 479.4,486.5 C482.2,483.2 484.9,480.1 490.0,477.9 C495.1,475.7 501.5,474.7 509.7,473.5 C517.9,472.3 529.6,471.0 539.2,470.9 C548.9,470.8 559.1,471.6 567.6,472.8 C576.1,474.0 584.6,476.7 590.0,478.2 C595.4,479.7 596.7,479.9 600.1,481.7 C603.5,483.5 607.0,485.8 610.2,488.8 C613.4,491.8 617.2,496.6 619.3,499.9 C621.3,503.2 621.1,504.6 622.5,508.8 C623.9,513.0 625.9,519.6 627.4,525.0 C628.9,530.4 630.3,535.9 631.5,541.3 C632.7,546.7 633.9,553.3 634.7,557.6 C635.5,561.9 635.4,560.2 636.3,567.3 C637.1,574.4 638.6,589.5 639.8,600.0 C641.0,610.5 642.4,620.5 643.5,630.0 C644.6,639.5 645.5,648.3 646.5,657.0 C647.5,665.7 648.6,673.0 649.6,682.0 C650.6,691.0 651.0,696.9 652.3,711.0 C653.6,725.1 656.1,750.2 657.6,766.7 C659.1,783.2 659.9,795.5 661.0,810.0 C662.1,824.5 663.8,846.7 664.4,854.0" fill="none" stroke="#b0102c" stroke-width="3.3" stroke-linejoin="round"/>
<path d="M422.4,854.0 C423.1,846.7 425.1,824.5 426.5,810.0 C427.9,795.5 429.8,778.3 430.9,766.7 C432.0,755.1 431.7,754.3 433.0,740.2 C434.3,726.1 437.4,695.2 438.8,682.0 C440.2,668.8 440.2,670.0 441.5,660.8 C442.8,651.5 445.2,636.6 446.7,626.5 C448.1,616.4 448.9,609.3 450.2,600.0 C451.5,590.7 453.3,577.7 454.4,570.6 C455.5,563.5 455.9,562.5 456.8,557.6 C457.8,552.7 459.0,546.7 460.1,541.3 C461.2,535.9 462.0,530.4 463.3,525.0 C464.6,519.6 466.6,513.4 468.2,508.8 C469.8,504.2 471.2,501.1 473.1,497.4 C475.0,493.7 476.6,489.8 479.4,486.5 C482.2,483.2 484.9,480.1 490.0,477.9 C495.1,475.7 501.5,474.7 509.7,473.5 C517.9,472.3 529.6,471.0 539.2,470.9 C548.9,470.8 559.1,471.6 567.6,472.8 C576.1,474.0 584.6,476.7 590.0,478.2 C595.4,479.7 596.7,479.9 600.1,481.7 C603.5,483.5 607.0,485.8 610.2,488.8 C613.4,491.8 617.2,496.6 619.3,499.9 C621.3,503.2 621.1,504.6 622.5,508.8 C623.9,513.0 625.9,519.6 627.4,525.0 C628.9,530.4 630.3,535.9 631.5,541.3 C632.7,546.7 633.9,553.3 634.7,557.6 C635.5,561.9 635.4,560.2 636.3,567.3 C637.1,574.4 638.6,589.5 639.8,600.0 C641.0,610.5 642.4,620.5 643.5,630.0 C644.6,639.5 645.5,648.3 646.5,657.0 C647.5,665.7 648.6,673.0 649.6,682.0 C650.6,691.0 651.0,696.9 652.3,711.0 C653.6,725.1 656.1,750.2 657.6,766.7 C659.1,783.2 659.9,795.5 661.0,810.0 C662.1,824.5 663.8,846.7 664.4,854.0" fill="none" stroke="#481078" stroke-opacity="0.55" stroke-width="1" stroke-linejoin="round"/>
</svg>
<div class="t m" style="right:1155px;top:417.48px;font-size:17.5px;color:#000;text-align:right;">0</div>
<div class="t m" style="right:1155px;top:560.18px;font-size:17.5px;color:#000;text-align:right;">−50</div>
<div class="t m" style="right:1155px;top:702.98px;font-size:17.5px;color:#000;text-align:right;">−100</div>
<div class="t m" style="right:1155px;top:846.68px;font-size:17.5px;color:#000;text-align:right;">−150</div>
<div class="t m" style="left:948.5px;top:414.28px;font-size:17.5px;color:#000;">0</div>
<div class="t m" style="left:948.5px;top:501.38px;font-size:17.5px;color:#000;">−2</div>
<div class="t m" style="left:948.5px;top:587.77px;font-size:17.5px;color:#000;">−4</div>
<div class="t m" style="left:948.5px;top:674.18px;font-size:17.5px;color:#000;">−6</div>
<div class="t m" style="left:948.5px;top:760.58px;font-size:17.5px;color:#000;">−8</div>
<div class="t m" style="left:948.5px;top:846.98px;font-size:17.5px;color:#000;">−10</div>
<div class="t m" style="left:75.0px;width:120px;top:859.14px;font-size:18.5px;color:#000;text-align:center;">39.988</div>
<div class="t m" style="left:156.3px;width:120px;top:859.14px;font-size:18.5px;color:#000;text-align:center;">39.99</div>
<div class="t m" style="left:237.60000000000002px;width:120px;top:859.14px;font-size:18.5px;color:#000;text-align:center;">39.992</div>
<div class="t m" style="left:318.9px;width:120px;top:859.14px;font-size:18.5px;color:#000;text-align:center;">39.994</div>
<div class="t m" style="left:400.2px;width:120px;top:859.14px;font-size:18.5px;color:#000;text-align:center;">39.996</div>
<div class="t m" style="left:481.5px;width:120px;top:859.14px;font-size:18.5px;color:#000;text-align:center;">39.998</div>
<div class="t m" style="left:562.8px;width:120px;top:859.14px;font-size:18.5px;color:#000;text-align:center;">40</div>
<div class="t m" style="left:644.1px;width:120px;top:859.14px;font-size:18.5px;color:#000;text-align:center;">40.002</div>
<div class="t m" style="left:725.4px;width:120px;top:859.14px;font-size:18.5px;color:#000;text-align:center;">40.004</div>
<div class="t m" style="left:806.6999999999999px;width:120px;top:859.14px;font-size:18.5px;color:#000;text-align:center;">40.006</div>
<div class="t m" style="left:482px;width:120px;top:884.94px;font-size:18.5px;color:#000;text-align:center;">ff</div>
<div class="t m" style="left:431px;top:423.98px;font-size:17.5px;color:#000;">Fs</div>
<div class="t m" style="left:532px;top:423.98px;font-size:17.5px;color:#000;">Fц</div>
<div class="t m" style="left:25.5px;top:609.94px;font-size:18.5px;color:#000;"><span>DK</span><span style="margin-left:1.5px">(</span><span style="margin-left:1.5px">ff</span><span style="margin-left:1px">)</span></div>
<div class="t m" style="left:25px;top:641.64px;font-size:18.5px;color:#000;"><span>DKK</span><span style="margin-left:1.5px">(</span><span style="margin-left:1.5px">ff</span><span style="margin-left:1px">)</span></div>
<div class="t m" style="left:978.5px;top:609.94px;font-size:18.5px;color:#000;"><span>DK</span><span style="margin-left:1.5px">(</span><span style="margin-left:1.5px">ff</span><span style="margin-left:1px">)</span></div>
<div class="t m" style="left:978px;top:641.64px;font-size:18.5px;color:#000;"><span>DKK</span><span style="margin-left:1.5px">(</span><span style="margin-left:1.5px">ff</span><span style="margin-left:1px">)</span></div>
<div class="a" style="left:24px;top:633px;width:42px;height:3px;background:#e80000;border-radius:1px;"></div>
<div class="a" style="left:25px;top:666px;width:40px;height:1px;background:#000080;"></div>
<div class="a" style="left:977px;top:633px;width:43px;height:3px;background:#e80000;border-radius:1px;"></div>
<div class="a" style="left:978px;top:666px;width:40px;height:1px;background:#000080;"></div>
<div class="a" style="left:1105px;top:715px;width:31px;height:1px;background:#2f6a3a;"></div>
<div class="a" style="left:1121px;top:713px;width:3px;height:3px;background:#9a3a30;"></div>
<div class="a" style="left:1122px;top:716px;width:1px;height:4px;background:#4a5a30;"></div>
<div class="a" style="left:1122px;top:705px;width:1px;height:8px;background:#1a7040;"></div>
<div class="a" style="left:1088px;top:443px;width:111px;height:138px;background:#ff8040;"></div>
<div class="a s" style="left:1088px;top:443px;font-size:18.5px;line-height:22.9px;color:#200000;white-space:pre;padding-top:1px;">Синий- без
ёмкости
на корпус

Красный- с
ёмкостью</div>
<div class="a dith" style="left:1259px;top:125px;width:24px;height:803px;"></div>
<div class="a dith" style="left:6px;top:928px;width:1253px;height:23px;"></div>
<div class="a" style="left:1259px;top:928px;width:24px;height:23px;background:#d4d0c8;"></div>
<div class="a" style="left:5px;top:952px;width:1280px;height:1px;background:#fff;"></div>
<div class="t s" style="left:6.5px;top:958.52px;font-size:16.8px;color:#000;">Нажмите F1 для справки.</div>
<div class="a" style="left:1283px;top:0px;width:2px;height:983px;background:#e8e6e1;"></div>
<div class="a" style="left:1259px;top:125px;width:24px;height:25px;background:#d4d0c8;box-sizing:border-box;border-top:1px solid #d4d0c8;border-left:1px solid #d4d0c8;border-right:1px solid #404040;border-bottom:1px solid #404040;box-shadow:inset 1px 1px 0 #fff,inset -1px -1px 0 #808080;"></div>
<svg class="a" style="left:1259px;top:125px" width="24" height="25"><path d="M7,15 H17 L12,10 Z" fill="#000"/></svg>
<div class="a" style="left:1259px;top:158px;width:24px;height:24px;background:#d4d0c8;box-sizing:border-box;border-top:1px solid #d4d0c8;border-left:1px solid #d4d0c8;border-right:1px solid #404040;border-bottom:1px solid #404040;box-shadow:inset 1px 1px 0 #fff,inset -1px -1px 0 #808080;"></div>
<div class="a" style="left:1259px;top:904px;width:24px;height:24px;background:#d4d0c8;box-sizing:border-box;border-top:1px solid #d4d0c8;border-left:1px solid #d4d0c8;border-right:1px solid #404040;border-bottom:1px solid #404040;box-shadow:inset 1px 1px 0 #fff,inset -1px -1px 0 #808080;"></div>
<svg class="a" style="left:1259px;top:904px" width="24" height="24"><path d="M7,9 H17 L12,14 Z" fill="#000"/></svg>
<div class="a" style="left:6px;top:928px;width:25px;height:23px;background:#d4d0c8;box-sizing:border-box;border-top:1px solid #d4d0c8;border-left:1px solid #d4d0c8;border-right:1px solid #404040;border-bottom:1px solid #404040;box-shadow:inset 1px 1px 0 #fff,inset -1px -1px 0 #808080;"></div>
<svg class="a" style="left:6px;top:928px" width="25" height="23"><path d="M15,6 V16 L10,11 Z" fill="#000"/></svg>
<div class="a" style="left:31px;top:928px;width:24px;height:23px;background:#d4d0c8;box-sizing:border-box;border-top:1px solid #d4d0c8;border-left:1px solid #d4d0c8;border-right:1px solid #404040;border-bottom:1px solid #404040;box-shadow:inset 1px 1px 0 #fff,inset -1px -1px 0 #808080;"></div>
<div class="a" style="left:1235px;top:928px;width:24px;height:23px;background:#d4d0c8;box-sizing:border-box;border-top:1px solid #d4d0c8;border-left:1px solid #d4d0c8;border-right:1px solid #404040;border-bottom:1px solid #404040;box-shadow:inset 1px 1px 0 #fff,inset -1px -1px 0 #808080;"></div>
<svg class="a" style="left:1235px;top:928px" width="24" height="23"><path d="M10,6 V16 L15,11 Z" fill="#000"/></svg>
<div class="a" style="left:5px;top:953px;width:1278px;height:1px;background:#a8a49c;"></div>
<div class="a" style="left:1043px;top:955px;width:48px;height:22px;box-sizing:border-box;border-top:1px solid #808080;border-left:1px solid #808080;border-right:1px solid #fff;border-bottom:1px solid #fff;"></div><div class="t s" style="left:1045px;top:958.66px;font-size:16.4px;">АВТО</div>
<div class="a" style="left:1093px;top:955px;width:46px;height:22px;box-sizing:border-box;border-top:1px solid #808080;border-left:1px solid #808080;border-right:1px solid #fff;border-bottom:1px solid #fff;"></div>
<div class="a" style="left:1141px;top:955px;width:40px;height:22px;box-sizing:border-box;border-top:1px solid #808080;border-left:1px solid #808080;border-right:1px solid #fff;border-bottom:1px solid #fff;"></div><div class="t s" style="left:1142.5px;top:958.66px;font-size:16.4px;">NUM</div>
<div class="a" style="left:1183px;top:955px;width:94px;height:22px;box-sizing:border-box;border-top:1px solid #808080;border-left:1px solid #808080;border-right:1px solid #fff;border-bottom:1px solid #fff;"></div><div class="t s" style="left:1185.5px;top:958.66px;font-size:16.4px;">Страница 1</div>
<div class="a" style="left:5px;top:979px;width:1278px;height:1px;background:#fff;"></div>
</body></html>
